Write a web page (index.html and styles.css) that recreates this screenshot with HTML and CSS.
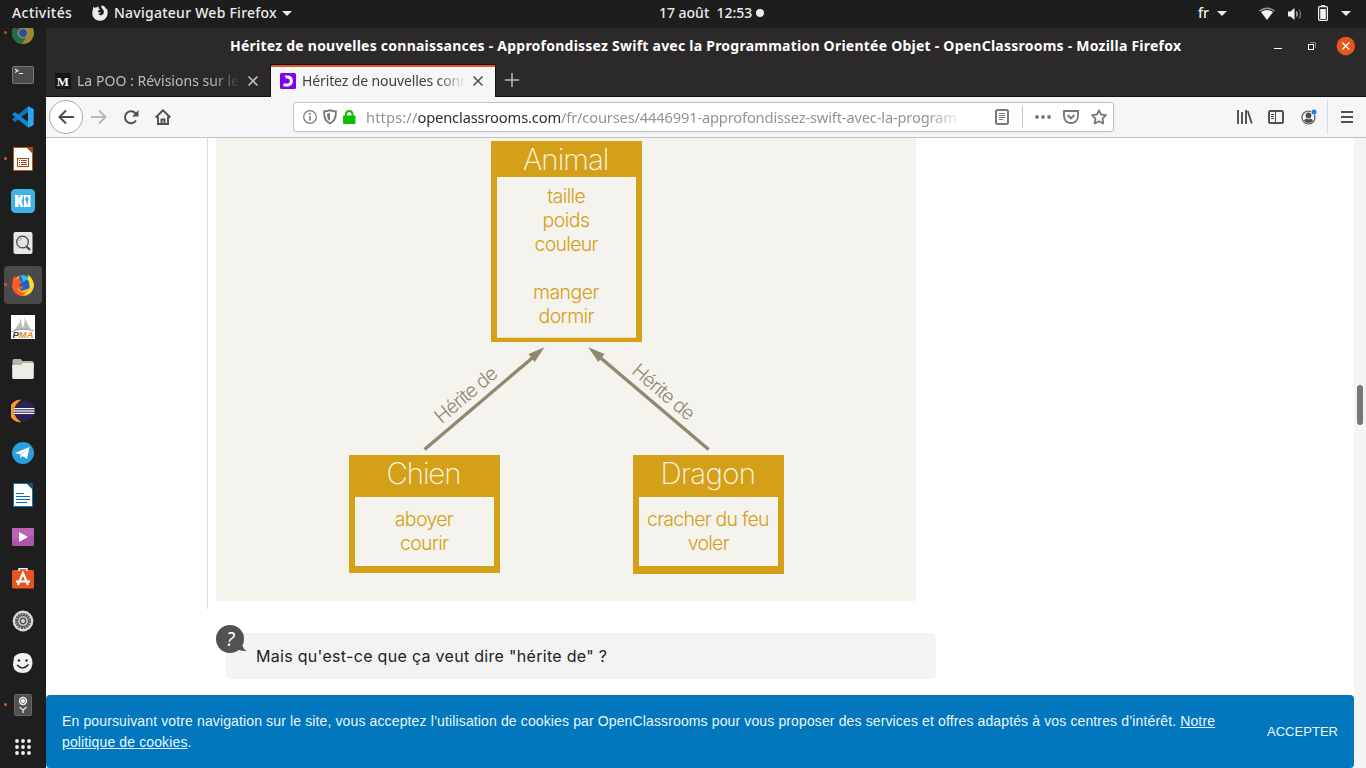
FILE: index.html
```html
<!DOCTYPE html>
<html lang="fr">
<head>
<meta charset="utf-8">
<title>Héritez de nouvelles connaissances</title>
<link rel="stylesheet" href="styles.css">
</head>
<body>
<div class="desktop">
  <header class="topbar">
    <span class="activities">Activités</span>
    <svg class="ff-mono" width="16" height="16" viewBox="0 0 16 16"><path fill="#ececec" d="M1.2 1.6 2.5 2.9Q3.5 2.2 4.7 2.4L6.7.9 6.5 3.2 8.3 4.3 6.1 5.7Q5.8 7.2 7 7.5L8.8 7.2Q8.2 9.4 5.9 8.6 7.4 11 10 9.9 12.3 8.7 11.7 5.8 11 3.8 9.3 2.8 10 1.1 9.5 0 13 1 14.3 4.2L14.8 3.3Q16.5 7.2 15 11.2 12.6 15.8 8 15.8 2.7 15.6.7 11 -.2 8 .9 4.8Z"/></svg>
    <span class="appname">Navigateur Web Firefox</span>
    <i class="caret"></i>
    <span class="clock">17 août&nbsp; 12:53</span>
    <i class="notif"></i>
    <div class="status">
      <span class="lang">fr</span>
      <i class="caret"></i>
      <svg class="wifi" width="16" height="14" viewBox="0 0 16 14"><path d="M.5 4Q8-1.5 15.5 4" fill="none" stroke="#999" stroke-width="1.5"/><path d="M2 5Q8 1 14 5L8 13Z" fill="#f2f2f2"/></svg>
      <svg class="sound" width="16" height="14" viewBox="0 0 16 14"><path d="M1 4.5H3.5L7.5 1V13L3.5 9.5H1Z" fill="#f2f2f2"/><path d="M9.5 4.5Q11 7 9.5 9.5" fill="none" stroke="#ccc" stroke-width="1.3"/><path d="M12 2.5Q15 7 12 11.5" fill="none" stroke="#777" stroke-width="1.2"/></svg>
      <svg class="battery" width="10" height="16" viewBox="0 0 10 16"><path d="M3 0H7V2H3Z" fill="#f2f2f2"/><rect x=".6" y="1.6" width="8.8" height="13.8" rx="1" fill="none" stroke="#f2f2f2" stroke-width="1.2"/><path d="M2.2 4H7.8V14H2.2Z" fill="#f2f2f2"/></svg>
      <i class="caret"></i>
    </div>
  </header>
  <div class="main">
    <nav class="dock">
      <div class="launcher running dim"><svg width="24" height="24" viewBox="0 0 24 24"><circle cx="12" cy="12" r="11" fill="#be9930"/><path d="M12 12 2.5 6.5A11 11 0 0 0 11 23L16 15Z" fill="#237d49"/><path d="M12 12 2.5 6.5A11 11 0 0 1 21.5 6.5H12Z" fill="#962b23"/><circle cx="12" cy="12" r="5.4" fill="#a9a9a4"/><circle cx="12" cy="12" r="4.2" fill="#345b9e"/></svg></div>
      <div class="launcher"><svg width="24" height="24" viewBox="0 0 24 24"><rect x="1.5" y="3.5" width="21" height="17" rx="1.5" fill="#4b4b4b" stroke="#777"/><path d="M4 6 7 7.8 4 9.5M8 10.500H12" fill="none" stroke="#eee" stroke-width="1.2"/></svg></div>
      <div class="launcher"><svg width="24" height="24" viewBox="0 0 24 24"><path d="M17 1.5V7L4 17 1 14.5Z" fill="#0b76bd"/><path d="M17 22.5V17L4 7 1 9.5Z" fill="#1387cf"/><path d="M17 1.2 22.7 4V20L17 22.8Z" fill="#2ea6ef"/></svg></div>
      <div class="launcher running"><svg width="24" height="24" viewBox="0 0 24 24"><path d="M2.5.5H17L21.500 5V23.500H2.500Z" fill="#fff" stroke="#b85018"/><path d="M15 0H22V7Z" fill="#a54817"/><rect x="6.500" y="11.500" width="11" height="8" fill="none" stroke="#a54817"/><path d="M8 13.500H9M10 13.500H16M8 15.500H9M10 15.500H16M8 17.500H9M10 17.500H16" stroke="#a54817"/></svg></div>
      <div class="launcher"><svg width="24" height="24" viewBox="0 0 24 24"><rect width="24" height="24" rx="4.500" fill="#3fb3e8"/><path d="M4 6H7.500V10L9.500 6H12.700L10.500 12 12.700 18H9.500L7.500 13.500V18H4Z" fill="#fff"/><path d="M13 6H19.500V18H13V13Z" fill="#fff"/><path d="M16 7.500Q19 10 17 12L16.500 17 15 12Q12.500 10 16 7.500Z" fill="#3fb3e8"/></svg></div>
      <div class="launcher"><svg width="24" height="24" viewBox="0 0 24 24"><rect x="2.500" y="1" width="19" height="22" rx="2" fill="#e8e8e6"/><path d="M5 5H19M5 8H19M5 11H19M5 14H19M5 17H19" stroke="#cecece"/><circle cx="11.500" cy="11" r="5.800" fill="#e4e4e2" stroke="#444" stroke-width="1.200"/><path d="M15.500 15.500 19 19" stroke="#444" stroke-width="2"/><path d="M8.500 10Q9 7.500 11 7.500" stroke="#999" fill="none"/></svg></div>
      <div class="launcher running active"><svg width="24" height="24" viewBox="0 0 24 24"><circle cx="12" cy="12.500" r="10.500" fill="#ffb31b"/><path d="M9 2.200Q15 .5 18 5.500L19 15 10 18 5 11Z" fill="#1b62c9"/><path d="M10 2Q15 1.500 17 6L12 9Z" fill="#28bced"/><path d="M2 5.500 4 3 5.500 6 9 4.500 8.500 7.500 11.500 9 8 11.500Q8.500 14.500 13 13.500 10 18 6 14.500 8 20 14 19.500L12 23Q3 22.500 1.200 14.500Z" fill="#ff5b28"/><path d="M1.300 11Q2 21 11 23 5.500 22.500 2.500 18Z" fill="#df2555"/><path d="M17 1.500Q23.800 7 22.800 14 20.500 22 12.500 23 20 18.500 18.500 12 18 7 15.500 5.500 18 5 17 1.500Z" fill="#ffdd30"/></svg></div>
      <div class="launcher"><svg width="24" height="24" viewBox="0 0 24 24"><path d="M0 0H24V24H0Z" fill="#fff"/><path d="M3 15Q9 9 9.500 3L12 15ZM11 14Q15 8 13 2L20 15Z" fill="#bdbdbd"/><path d="M1 16.500Q12 12 23 16" fill="none" stroke="#999"/><text x="12" y="22.500" text-anchor="middle" textLength="21" lengthAdjust="spacingAndGlyphs" class="pma"><tspan fill="#33375c">P</tspan><tspan fill="#e58a1b">MA</tspan></text></svg></div>
      <div class="launcher"><svg width="24" height="24" viewBox="0 0 24 24"><path d="M1.500 3.500Q1.500 2 3 2H9.500L11.500 4H21Q22.500 4 22.500 5.500V11H1.500Z" fill="#b8b4aa"/><path d="M1.200 8H10L12 6H22.800V20.500Q22.800 22 21.300 22H2.700Q1.200 22 1.200 20.500Z" fill="#eeece7"/></svg></div>
      <div class="launcher"><svg width="24" height="24" viewBox="0 0 24 24"><path d="M9.500 1A11 11 0 0 0 9.500 23 13 13 0 0 1 9.500 1Z" fill="#f79a2b" stroke="#f79a2b" stroke-width=".8"/><circle cx="13.300" cy="12" r="10.300" fill="#2c2255"/><path d="M3 9.500H23.500M3 14.500H23.500" stroke="#fff"/><path d="M3 12H23.500" stroke="#b3b0cc" stroke-width="2.800"/></svg></div>
      <div class="launcher"><svg width="24" height="24" viewBox="0 0 24 24"><circle cx="12" cy="12" r="11" fill="#2aa0da"/><path d="M4 12 18.500 6 16 18 11.500 15 9.500 17 9 13.500Z" fill="#fff"/><path d="M9 13.500 16 8 10.500 14.300 9.500 17Z" fill="#b9d4e6"/></svg></div>
      <div class="launcher"><svg width="24" height="24" viewBox="0 0 24 24"><path d="M2.500.5H17L21.500 5V23.500H2.500Z" fill="#fff" stroke="#0d76b6"/><path d="M15 0H22V7Z" fill="#0a5383"/><path d="M5 10.500H13M5 13.500H19M5 16.500H19M5 19.500H16" stroke="#0a6fab"/></svg></div>
      <div class="launcher"><svg width="24" height="24" viewBox="0 0 24 24"><rect x="1" y="3" width="22" height="18" rx="1.500" fill="#ac55ad"/><path d="M1 3H23V10L1 16Z" fill="#b963b9"/><path d="M8 7 17 12 8 17Z" fill="#fff"/></svg></div>
      <div class="launcher"><svg width="24" height="24" viewBox="0 0 24 24"><rect x="1" y="3" width="22" height="18.500" rx="1.500" fill="#e95420"/><path d="M8 4V1.700H16V4" fill="none" stroke="#fff" stroke-width="1.400"/><path d="M7 18 12 6 17 18M5 14.500H19" fill="none" stroke="#fff" stroke-width="2.200"/></svg></div>
      <div class="launcher"><svg width="24" height="24" viewBox="0 0 24 24"><circle cx="12" cy="12" r="10.400" fill="#d9d9d7"/><circle cx="12" cy="12" r="7" fill="none" stroke="#555" stroke-width="2" stroke-dasharray="2 .75"/><circle cx="12" cy="12" r="5.500" fill="none" stroke="#555" stroke-width="1.300"/><circle cx="12" cy="12" r="2.700" fill="none" stroke="#555" stroke-width="1.500"/></svg></div>
      <div class="launcher"><svg width="24" height="24" viewBox="0 0 24 24"><path d="M3 6Q8 .5 16 2.500 22 5 21.500 13 20 22 12 22 3 22 2 14Z" fill="#f1f1f1"/><circle cx="8" cy="9.500" r="1.200" fill="#222"/><circle cx="15.500" cy="9.500" r="1.200" fill="#222"/><path d="M6 14Q12 20 17.500 13.500" fill="none" stroke="#222" stroke-width="1.500"/></svg></div>
      <div class="launcher running"><svg width="24" height="24" viewBox="0 0 24 24"><rect x="3.500" y="1.500" width="17" height="21" rx="1" fill="#505050" stroke="#666"/><circle cx="12" cy="8" r="4.200" fill="#eee"/><circle cx="12" cy="8" r="2.500" fill="#fff" stroke="#777"/><path d="M8.500 14 12 17 15.500 14M12 16V20" fill="none" stroke="#ddd" stroke-width="1.400"/></svg></div>
      <div class="launcher"><svg width="24" height="24" viewBox="0 0 24 24" fill="#eee"><circle cx="6" cy="6" r="1.900"/><circle cx="12" cy="6" r="1.900"/><circle cx="18" cy="6" r="1.900"/><circle cx="6" cy="12" r="1.900"/><circle cx="12" cy="12" r="1.900"/><circle cx="18" cy="12" r="1.900"/><circle cx="6" cy="18" r="1.900"/><circle cx="12" cy="18" r="1.900"/><circle cx="18" cy="18" r="1.900"/></svg></div>
    </nav>
    <section class="window">
      <div class="titlebar">
        <span class="title">Héritez de nouvelles connaissances - Approfondissez Swift avec la Programmation Orientée Objet - OpenClassrooms - Mozilla Firefox</span>
        <svg class="winbtns" width="84" height="20" viewBox="0 0 84 20" fill="none"><path d="M2 12.500H10" stroke="#fff"/><rect x="36.500" y="8.500" width="5" height="5" stroke="#fff"/><path d="M38 6.500H43.500V12" stroke="#888"/><circle cx="73.800" cy="10" r="9.200" fill="#e95420"/><path d="M70.300 6.500 77.300 13.500M77.300 6.500 70.300 13.500" stroke="#fff" stroke-width="1.300"/></svg>
      </div>
      <div class="tabs">
        <div class="tab">
          <svg width="16" height="16" viewBox="0 0 16 16"><path d="M0 0H16V16H0Z" fill="#151515"/><text x="8" y="12.500" text-anchor="middle" class="medium">M</text></svg>
          <span class="label first">La POO : Révisions sur le</span>
          <svg class="close" width="12" height="12" viewBox="0 0 12 12"><path d="M1.500 1.500 10.500 10.500M10.500 1.500 1.500 10.500" stroke="#bdbdbd" stroke-width="1.600"/></svg>
        </div>
        <div class="tab selected">
          <svg width="16" height="16" viewBox="0 0 16 16"><rect width="16" height="16" rx="1.500" fill="#7f00f2"/><path d="M4.500 4.100H8A4 4 0 0 1 8 12H3.500" fill="none" stroke="#fff" stroke-width="3"/><path d="M3 2H4.500Q5 4.500 6.500 5.500L3 6Z" fill="#7f00f2"/></svg>
          <span class="label second">Héritez de nouvelles conn</span>
          <svg class="close" width="12" height="12" viewBox="0 0 12 12"><path d="M1.500 1.500 10.500 10.500M10.500 1.500 1.500 10.500" stroke="#505355" stroke-width="1.600"/></svg>
        </div>
        <svg class="newtab" width="14" height="14" viewBox="0 0 14 14"><path d="M7 0V14M0 7H14" stroke="#b9b9b9" stroke-width="1.500"/></svg>
      </div>
      <div class="toolbar">
        <span class="back"><svg width="16" height="16" viewBox="0 0 16 16"><path d="M16 8H1.500M8 1.500 1.500 8 8 14.500" fill="none" stroke="#4b4b4d" stroke-width="2"/></svg></span>
        <svg class="fwd" width="16" height="16" viewBox="0 0 16 16"><path d="M0 8H14.500M8 1.500 14.500 8 8 14.500" fill="none" stroke="#b7b8b9" stroke-width="2"/></svg>
        <svg class="reload" width="16" height="16" viewBox="0 0 16 16"><path d="M13 11.500A6 6 0 1 1 13 5" fill="none" stroke="#505052" stroke-width="2"/><path d="M15.500 1V7.500H9Z" fill="#505052"/></svg>
        <svg class="home" width="16" height="16" viewBox="0 0 16 16"><path d="M.7 8.500 8 1.300 15.300 8.500M3 7.500V15H13V7.500M6.500 15V10.500H9.500V15" fill="none" stroke="#505052" stroke-width="1.900"/></svg>
        <div class="urlbar">
          <svg width="14" height="14" viewBox="0 0 14 14"><circle cx="7" cy="7" r="6.300" fill="none" stroke="#77787a" stroke-width="1.200"/><path d="M7 6V10.500M7 3.300V5" stroke="#77787a" stroke-width="1.600"/></svg>
          <svg width="14" height="16" viewBox="0 0 14 16"><path d="M7 1.200Q10 2.500 12.800 2.300 13.500 11.500 7 14.500.5 11.500 1.200 2.300 4 2.500 7 1.200Z" fill="none" stroke="#77787a" stroke-width="1.900"/><path d="M7 4V12Q3.700 9.500 4 4.700Z" fill="#77787a"/></svg>
          <svg width="13" height="14" viewBox="0 0 13 14"><rect y="5.500" width="12.500" height="8.500" rx="1" fill="#12bc00"/><path d="M3 6.500V4.500Q3 1 6.200 1 9.500 1 9.500 4.500V6.500" fill="none" stroke="#12bc00" stroke-width="2"/></svg>
          <div class="url"><span class="scheme">https://</span><span class="host">openclassrooms.com</span><span class="path">/fr/courses/4446991-approfondissez-swift-avec-la-program</span></div>
          <svg class="reader" width="14" height="16" viewBox="0 0 14 16"><rect x="1" y="1" width="12" height="14" rx="1.500" fill="none" stroke="#77787a" stroke-width="2"/><path d="M4 4.500H10M4 6.500H10M4 8.500H10M4 10.500H8" stroke="#77787a"/></svg>
          <i class="sep"></i>
          <svg class="dots" width="16" height="4" viewBox="0 0 16 4" fill="#77787a"><circle cx="2" cy="2" r="1.900"/><circle cx="8" cy="2" r="1.900"/><circle cx="14" cy="2" r="1.900"/></svg>
          <svg class="pocket" width="16" height="16" viewBox="0 0 16 16"><path d="M1 2H15V7Q14.500 14 8 14 1.500 14 1 7Z" fill="none" stroke="#77787a" stroke-width="1.900"/><path d="M4.500 6 8 9.300 11.500 6" fill="none" stroke="#77787a" stroke-width="2"/></svg>
          <svg class="star" width="16" height="16" viewBox="0 0 16 16"><path d="M8 1.300 10.100 5.500 14.900 6.200 11.500 9.600 12.300 14.500 8 12.200 3.700 14.500 4.500 9.600 1.100 6.200 5.900 5.500Z" fill="none" stroke="#77787a" stroke-width="1.800" stroke-linejoin="round"/></svg>
        </div>
        <svg class="library" width="16" height="14" viewBox="0 0 16 14"><path d="M1 0V14M5 2V14M9 0V14" stroke="#505052" stroke-width="1.900"/><path d="M10.800 1 14.700 13.500" stroke="#505052" stroke-width="1.800"/></svg>
        <svg class="sidebar" width="16" height="14" viewBox="0 0 16 14"><rect x="1" y="1" width="14" height="12" rx="1.500" fill="none" stroke="#505052" stroke-width="2"/><path d="M7.500 1V13M3 4.500H6M3 6.500H6M3 8.500H6" stroke="#505052"/></svg>
        <svg class="account" width="16" height="16" viewBox="0 0 16 16"><circle cx="7.500" cy="8.500" r="6.500" fill="none" stroke="#505052" stroke-width="1.200"/><circle cx="7.500" cy="6.500" r="2.900" fill="#505052"/><path d="M3 12Q3.500 9.700 5.500 9.700 7.500 11 9.500 9.700 11.500 9.700 12 12 7.500 16 3 12Z" fill="#505052"/><circle cx="13" cy="3" r="3" fill="#f5f6f7"/><circle cx="13" cy="3" r="2.500" fill="#0a84ff"/></svg>
        <i class="sep tall"></i>
        <svg class="menu" width="12" height="12" viewBox="0 0 12 12"><path d="M0 1H12M0 6H12M0 11H12" stroke="#505052" stroke-width="1.900"/></svg>
      </div>
      <div class="page">
        <main class="article">
          <div class="figure-wrap">
            <svg class="diagram" width="700" height="463" viewBox="216 138 700 463">
              <path fill="#d4a017" fill-rule="evenodd" d="M491 141H642V342H491ZM497 177V337.700H636V177ZM349 455H500V573H349ZM355 497V566H494V497ZM633 455H784V574H633ZM639 497V566H778V497Z"/>
              <g class="node-title">
                <text x="523" y="170" textLength="86.500">Animal</text>
                <text x="386.500" y="484" textLength="75">Chien</text>
                <text x="660.500" y="484" textLength="95.500">Dragon</text>
              </g>
              <g class="node-text">
                <text x="547.300" y="203" textLength="38.500">taille</text>
                <text x="542.500" y="227" textLength="47.500">poids</text>
                <text x="534.500" y="251" textLength="64">couleur</text>
                <text x="533" y="299" textLength="66.500">manger</text>
                <text x="538.500" y="323" textLength="56">dormir</text>
                <text x="394.800" y="526" textLength="59">aboyer</text>
                <text x="400" y="550" textLength="49">courir</text>
                <text x="647" y="526" textLength="122.500">cracher du feu</text>
                <text x="687.700" y="550" textLength="42">voler</text>
              </g>
              <g stroke="#928870" stroke-width="3.400"><path d="M424.500 449.500 534 356.500M708.700 449.500 599 356.500"/></g>
              <path fill="#928870" d="M544.500 347.200 534.700 362 532 358.500 528.500 354ZM588.300 347.200 598.300 362 601 358.500 604.600 354Z"/>
              <g class="edge-text">
                <text transform="translate(441.500 424.300) rotate(-40.300)" textLength="75.500">Hérite de</text>
                <text transform="translate(630.500 372.800) rotate(40.300)" textLength="75.500">Hérite de</text>
              </g>
            </svg>
          </div>
          <div class="question">
            <p>Mais qu'est-ce que ça veut dire "hérite de" ?</p>
            <svg class="bubble" width="32" height="30" viewBox="0 0 32 30"><path d="M14 0A14 14 0 1 1 14 28 14 14 0 0 1 14 0ZM26 19Q27 24 30.500 26 25 26.500 21 24Z" fill="#525252"/><text x="14.500" y="20.500" text-anchor="middle">?</text></svg>
          </div>
        </main>
        <div class="scroll"><i></i></div>
        <div class="cookies">
          <p>En poursuivant votre navigation sur le site, vous acceptez l’utilisation de cookies par OpenClassrooms pour vous proposer des services et offres adaptés à vos centres d’intérêt. <a>Notre<br>politique de cookies</a>.</p>
          <span class="accept">ACCEPTER</span>
        </div>
      </div>
    </section>
  </div>
</div>
</body>
</html>
```
FILE: styles.css
```css
* { box-sizing: border-box; }
body { margin: 0; font-family: "Noto Sans", sans-serif; font-size: 14.67px; }
svg { display: block; flex: none; }
p { margin: 0; }
.desktop { width: 1366px; height: 768px; overflow: hidden; display: flex; flex-direction: column; background: #1d1d1d; }

.topbar { height: 28px; flex: none; display: flex; align-items: center; color: #ececec; font-size: 14px; font-weight: 500; line-height: 28px; white-space: pre; }
.topbar span { height: 28px; }
.activities { width: 62px; margin-left: 12px; letter-spacing: .42px; }
.ff-mono { margin: -2px 0 0 18px; }
.appname { width: 163px; margin-left: 6px; letter-spacing: .25px; }
.caret { width: 0; height: 0; border: 5px solid transparent; border-top-color: #ececec; border-bottom: 0; margin-left: 5px; margin-top: -1px; }
.clock { width: 95px; margin-left: 367px; letter-spacing: -.02px; }
.topbar .activities, .topbar .appname, .topbar .clock, .topbar .lang { margin-top: -2px; }
.notif { width: 8px; height: 8px; border-radius: 50%; background: #ececec; margin: -2px 0 0 2px; }
.status { display: flex; align-items: center; margin-left: auto; margin-right: 15px; }
.lang { width: 14px; }
.wifi { margin-left: 32px; }
.sound { margin-left: 12px; }
.battery { margin: -3px 0 0 15px; }
.battery + .caret { margin-left: 13px; }

.main { flex: 1; min-height: 0; display: flex; }
.dock { width: 46px; overflow: hidden; background: #1e1e1e; display: flex; flex-direction: column; }
.launcher { height: 42px; flex: none; display: flex; align-items: center; justify-content: center; position: relative; }
.launcher:first-child { margin-top: -16px; }
.dim { opacity: .85; }
.running::before { content: ""; position: absolute; left: 4px; top: 19px; width: 3px; height: 3px; border-radius: 50%; background: #e95420; }
.active { height: 38px; margin: 2px 4px; border-radius: 4px; background: #4a4a4a; }
.active::before { left: 0; top: 17px; }
.pma { font: italic 900 9px "Liberation Sans", sans-serif; }

.window { width: 1320px; display: flex; flex-direction: column; background: #fff; }
.titlebar { height: 37px; flex: none; background: #2b292a; color: #fff; display: flex; align-items: center; }
.title { width: 953px; margin-left: 184px; font-size: 14px; font-weight: 700; letter-spacing: .237px; white-space: nowrap; line-height: 36px; height: 38px; }
.winbtns { margin-left: 89px; margin-top: -1px; }
.tabs { height: 32px; flex: none; display: flex; background: #2b292a; border-bottom: 1px solid #101012; }
.tab { width: 225px; display: flex; align-items: center; padding-left: 9px; color: #bdbdbd; }
.selected { width: 224px; height: 32px; background: #f5f6f7; color: #3e4144; border-top: 2px solid #e95420; box-shadow: 0 0 0 1px #111; clip-path: inset(-1px -1px 0 -1px); padding-bottom: 3px; }
.label { width: 164px; margin-left: 6px; white-space: nowrap; font-size: 14px; line-height: 24px; -webkit-mask-image: linear-gradient(90deg, #000 135px, transparent 100%); mask-image: linear-gradient(90deg, #000 135px, transparent 100%); }
.first { letter-spacing: .03px; }
.second { letter-spacing: -.12px; }
.close { margin-left: 6px; }
.newtab { margin: 8px 0 0 10px; }

.toolbar { height: 41px; flex: none; display: flex; align-items: center; background: #f5f6f7; border-bottom: 1px solid #bdc3ca; }
.back { width: 34px; height: 34px; margin-left: 3px; border: 1px solid #a9abad; border-radius: 50%; background: #fff; display: flex; align-items: center; justify-content: center; }
.fwd { margin-left: 8px; }
.reload { margin-left: 16px; }
.home { margin-left: 16px; }
.urlbar { width: 821px; height: 30px; margin-left: 122px; border: 1px solid #bfc5cb; border-radius: 3px; background: #fff; display: flex; align-items: center; padding-left: 9px; box-shadow: 0 1px 3px rgba(0,0,0,.05); }
.urlbar svg + svg { margin-left: 6px; }
.urlbar .url { width: 594px; margin-left: 10px; white-space: nowrap; line-height: 24px; color: #929394; -webkit-mask-image: linear-gradient(90deg, #000 560px, transparent 598px); mask-image: linear-gradient(90deg, #000 560px, transparent 598px); }
.scheme { letter-spacing: .12px; }
.host { color: #2c2d2f; letter-spacing: -.14px; }
.path { letter-spacing: -.16px; }
.urlbar .reader { margin-left: 35px; }
.sep { width: 1px; height: 22px; background: #c3c6ca; margin-left: 13px; }
.urlbar .dots { margin-left: 12px; }
.urlbar .pocket, .urlbar .star { margin-left: 12px; }
.library { margin-left: 123px; }
.sidebar { margin-left: 15px; }
.account { margin-left: 17px; }
.tall { height: 34px; background: #d8dadc; margin-left: 10px; }
.menu { margin-left: 13px; }

.page { flex: 1; min-height: 0; position: relative; display: flex; justify-content: space-between; }
.article { margin-left: 161px; width: 729px; }
.figure-wrap { height: 471px; border-left: 1px solid #ddd; padding-left: 8px; }
.diagram { background: #f4f3ee; font-family: Inter, sans-serif; font-weight: 300; }
.node-title { font-size: 29.5px; fill: #f8f5e9; font-weight: 250; }
.node-text { font-size: 19.5px; fill: #d4a017; }
.edge-text { font-size: 19.5px; fill: #928870; }
.question { position: relative; width: 710px; height: 46px; margin: 24px 0 0 19px; padding-left: 30px; border-radius: 5px; background: #f3f3f3; color: #222; font: 16px/46px Inter, sans-serif; letter-spacing: .3px; }
.bubble { position: absolute; left: -10px; top: -8px; }
.bubble text { font: italic 19px "Noto Sans", sans-serif; fill: #fff; }
.scroll { width: 12px; background: #f4f4f4; padding: 247px 3px 0; }
.scroll i { display: block; width: 6px; height: 40px; border-radius: 3px; background: #777; }
.cookies { position: absolute; left: 0; bottom: 0; width: 1308px; height: 73px; border-radius: 4px; background: #0277bd; color: #e9f6fd; display: flex; align-items: center; justify-content: space-between; padding: 0 16px; font: 14px/21px "Liberation Sans", sans-serif; }
.cookies p { letter-spacing: .128px; white-space: nowrap; }
.cookies a { text-decoration: underline; }
.accept { font-size: 13px; letter-spacing: .03px; }
.medium { font: 700 13px "Liberation Serif", serif; fill: #fff; }
```
